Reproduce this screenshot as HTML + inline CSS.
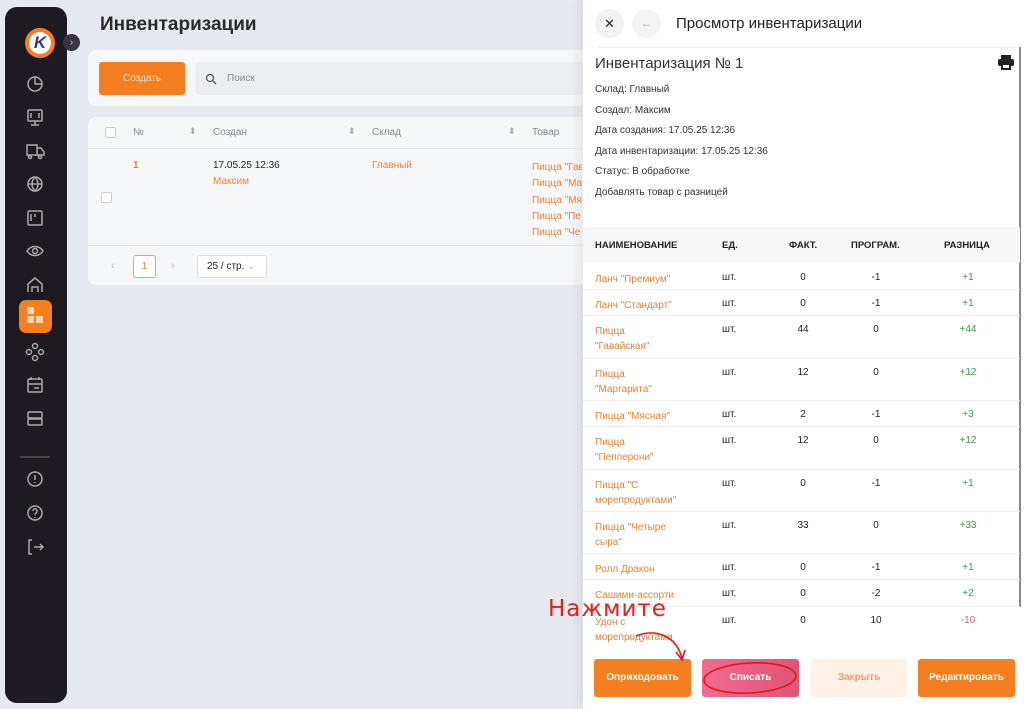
<!DOCTYPE html>
<html><head><meta charset="utf-8"><style>
*{box-sizing:border-box;margin:0;padding:0}
body{width:1024px;height:709px;overflow:hidden;background:#e6eaf0;font-family:"Liberation Sans",sans-serif;position:relative;color:#222}
.side{position:absolute;left:5px;top:7px;width:62px;height:696px;background:#1d1a22;border-radius:12px}
.logo{position:absolute;left:20px;top:21px;width:30px;height:30px;border-radius:50%;background:#f47f20;display:flex;align-items:center;justify-content:center}
.logo div{width:22px;height:22px;border-radius:50%;background:#fff;color:#2a3a9a;font-weight:bold;font-size:17px;text-align:center;line-height:22px;font-style:italic}
.tog{position:absolute;left:58px;top:27px;width:17px;height:17px;border-radius:50%;background:#3a3442;color:#ccc;font-size:10px;text-align:center;line-height:17px}
.act{position:absolute;left:19px;top:300px;width:33px;height:33px;border-radius:7px;background:#f47f20}
.h1{position:absolute;left:100px;top:14px;font-size:19px;font-weight:bold;color:#2a2a2a}
.card{position:absolute;background:#f6f7f9;border-radius:8px}
.o{color:#e0853a}
.panel{position:absolute;left:583px;top:0;width:441px;height:709px;background:#fff;box-shadow:-4px 0 12px rgba(0,0,0,.08)}
.p{position:absolute;font-size:10px;color:#333}
.row{position:absolute;left:0;width:437px;font-size:10px;border-bottom:1px solid #eee}
.row span{position:absolute}
.btn{position:absolute;top:659px;height:38px;border-radius:3px;font-size:10px;font-weight:bold;color:#fff;text-align:center;line-height:38px}
</style></head><body>
<div class="side">
<div class="logo"><div>K</div></div>
<div class="tog">›</div>
</div>
<svg style="position:absolute;left:0;top:0" width="70" height="709" fill="none" stroke="#aaa" stroke-width="1.5">
<circle cx="35" cy="84" r="7"/><path d="M35 77v7h7"/>
<rect x="28" y="110" width="14" height="11" rx="1"/><path d="M35 121v4M31 125h8M31 113v5M39 113v5"/>
<rect x="27" y="145" width="10" height="10"/><path d="M37 148h4l3 4v3h-7"/><circle cx="30" cy="157" r="1.5"/><circle cx="40" cy="157" r="1.5"/>
<circle cx="35" cy="184" r="7"/><path d="M28 184h14M35 177c-4 4-4 10 0 14c4-4 4-10 0-14"/>
<rect x="28" y="211" width="14" height="14" rx="1"/><path d="M31 214v7M35 214v3"/>
<path d="M27 251c4-6 12-6 16 0c-4 6-12 6-16 0z"/><circle cx="35" cy="251" r="2.5"/>
<path d="M28 292v-8l7-6 7 6v8M32 292v-5h6v5"/>
<circle cx="35" cy="346" r="2.5"/><circle cx="29" cy="352" r="2.5"/><circle cx="41" cy="352" r="2.5"/><circle cx="35" cy="358" r="2.5"/>
<rect x="28" y="379" width="14" height="13" rx="1"/><path d="M28 384h14M31 377v3M39 377v3M34 388h5"/>
<rect x="28" y="412" width="14" height="6" rx="1"/><rect x="28" y="419" width="14" height="6" rx="1"/>
<path d="M20 457h30" stroke="#555"/>
<circle cx="35" cy="479" r="7"/><path d="M35 475v5M35 482v1"/>
<circle cx="35" cy="513" r="7"/><path d="M33 511c0-3 4-3 4 0c0 2-2 2-2 4M35 517v1"/>
<path d="M32 540h-3v14h3M34 547h9M40 544l3 3-3 3"/>
</svg>
<div class="act"></div>
<svg style="position:absolute;left:26px;top:306px" width="20" height="22" fill="#f9d9b8"><rect x="1" y="1" width="7" height="7" rx="1"/><rect x="1" y="10" width="7" height="7" rx="1"/><rect x="10" y="10" width="7" height="7" rx="1"/></svg>
<div class="h1">Инвентаризации</div>
<div class="card" style="left:88px;top:50px;width:500px;height:56px"></div>
<div style="position:absolute;left:99px;top:62px;width:86px;height:33px;background:#f47f20;border-radius:3px;color:#fbe1cc;font-size:10px;text-align:center;line-height:33px">Создать</div>
<div style="position:absolute;left:195px;top:62px;width:390px;height:33px;background:#eceef1;border-radius:5px;font-size:10px;color:#888;line-height:33px;padding-left:32px">Поиск</div>
<svg style="position:absolute;left:205px;top:73px" width="12" height="12" fill="none" stroke="#555" stroke-width="1.3"><circle cx="5" cy="5" r="3.5"/><path d="M8 8l3 3"/></svg>
<div class="card" style="left:88px;top:117px;width:500px;height:168px"></div>
<div style="position:absolute;left:88px;top:117px;width:500px;height:32px;border-bottom:1px solid #e8e8e8;font-size:10px;color:#888">
<div style="position:absolute;left:17px;top:10px;width:11px;height:11px;border:1px solid #ccc;border-radius:2px;background:#fff"></div>
<span style="position:absolute;left:45px;top:10px">№</span><span style="position:absolute;left:101px;top:9px;font-size:9px;color:#aaa">⬍</span>
<span style="position:absolute;left:125px;top:10px">Создан</span><span style="position:absolute;left:260px;top:9px;font-size:9px;color:#aaa">⬍</span>
<span style="position:absolute;left:284px;top:10px">Склад</span><span style="position:absolute;left:420px;top:9px;font-size:9px;color:#aaa">⬍</span>
<span style="position:absolute;left:444px;top:10px">Товар</span></div>
<div style="position:absolute;left:88px;top:150px;font-size:10px">
<div style="position:absolute;left:13px;top:42px;width:11px;height:11px;border:1px solid #ccc;border-radius:2px;background:#fff"></div>
<span class="o" style="position:absolute;left:45px;top:10px;font-weight:bold">1</span>
<span style="position:absolute;left:125px;top:10px;white-space:nowrap">17.05.25 12:36</span>
<span class="o" style="position:absolute;left:125px;top:26px">Максим</span>
<span class="o" style="position:absolute;left:284px;top:10px">Главный</span>
<div class="o" style="position:absolute;left:444px;top:10px;line-height:16.3px;white-space:nowrap;width:50px;overflow:hidden">Пицца "Гав<br>Пицца "Ма<br>Пицца "Мя<br>Пицца "Пе<br>Пицца "Че</div></div>
<div style="position:absolute;left:88px;top:245px;width:500px;border-top:1px solid #e8e8e8"></div>
<span style="position:absolute;left:111px;top:260px;color:#bbb;font-size:11px">‹</span>
<div style="position:absolute;left:133px;top:255px;width:23px;height:23px;border:1px solid #f0a060;border-radius:3px;color:#e0853a;font-size:10px;text-align:center;line-height:21px;background:#fff">1</div>
<span style="position:absolute;left:171px;top:260px;color:#bbb;font-size:11px">›</span>
<div style="position:absolute;left:197px;top:255px;width:70px;height:23px;border:1px solid #ddd;border-radius:3px;font-size:10px;line-height:21px;padding-left:9px;background:#fff">25 / стр. <span style="color:#bbb">⌄</span></div>

<div class="panel">
<div style="position:absolute;left:12px;top:9px;width:29px;height:29px;border-radius:50%;background:#f2f2f2;text-align:center;line-height:29px;font-size:13px">✕</div>
<div style="position:absolute;left:49px;top:9px;width:29px;height:29px;border-radius:50%;background:#f4f4f4;text-align:center;line-height:29px;font-size:12px;color:#aaa">←</div>
<div style="position:absolute;left:93px;top:15px;font-size:15px;color:#222">Просмотр инвентаризации</div>
<div style="position:absolute;left:15px;top:47px;width:420px;border-top:1px solid #eee"></div>
<div style="position:absolute;left:436px;top:47px;height:560px;border-left:2px solid #888"></div>
<div class="p" style="left:12px;top:55px;font-size:15px">Инвентаризация № 1</div>
<svg style="position:absolute;left:415px;top:55px" width="16" height="15"><rect x="3" y="0" width="10" height="4" fill="#222"/><rect x="0" y="4" width="16" height="7" rx="2" fill="#222"/><rect x="3" y="9" width="10" height="6" fill="#222"/><rect x="5" y="10" width="6" height="3" fill="#fff"/></svg>
<div class="p" style="left:12px;top:84px">Склад: Главный</div>
<div class="p" style="left:12px;top:105px">Создал: Максим</div>
<div class="p" style="left:12px;top:125px">Дата создания: 17.05.25 12:36</div>
<div class="p" style="left:12px;top:146px">Дата инвентаризации: 17.05.25 12:36</div>
<div class="p" style="left:12px;top:166px">Статус: В обработке</div>
<div class="p" style="left:12px;top:187px">Добавлять товар с разницей</div>
<div style="position:absolute;left:0;top:227px;width:437px;height:36px;background:#f7f7f7;font-size:9.5px;font-weight:bold;color:#222">
<span style="position:absolute;left:12px;top:13px">НАИМЕНОВАНИЕ</span><span style="position:absolute;left:139px;top:13px">ЕД.</span><span style="position:absolute;left:206px;top:13px">ФАКТ.</span><span style="position:absolute;left:268px;top:13px">ПРОГРАМ.</span><span style="position:absolute;left:361px;top:13px">РАЗНИЦА</span></div>
<div id="rows"></div>
</div>
<script>
var d=[["Ланч \"Премиум\"","0","-1","+1",26],["Ланч \"Стандарт\"","0","-1","+1",26],["Пицца<br>\"Гавайская\"","44","0","+44",43],["Пицца<br>\"Маргарита\"","12","0","+12",42],["Пицца \"Мясная\"","2","-1","+3",26],["Пицца<br>\"Пепперони\"","12","0","+12",43],["Пицца \"С<br>морепродуктами\"","0","-1","+1",42],["Пицца \"Четыре<br>сыра\"","33","0","+33",42],["Ролл Дракон","0","-1","+1",26],["Сашими-ассорти","0","-2","+2",27],["Удон с<br>морепродуктами","0","10","-10",40]];
var y=264,h="";d.forEach(function(r){h+='<div class="row" style="top:'+y+'px;height:'+r[4]+'px"><span class="o" style="left:12px;top:8px;line-height:15px">'+r[0]+'</span><span style="left:139px;top:8px">шт.</span><span style="left:205px;top:8px;width:30px;text-align:center">'+r[1]+'</span><span style="left:278px;top:8px;width:30px;text-align:center">'+r[2]+'</span><span style="left:370px;top:8px;width:30px;text-align:center;color:'+(r[3][0]=='-'?'#e06070':'#3aa040')+'">'+r[3]+'</span></div>';y+=r[4];});
document.getElementById('rows').innerHTML=h;
</script>
<div style="position:absolute;left:583px;top:645px;width:441px;height:64px;background:#fff"></div>
<div class="btn" style="left:594px;width:97px;background:#f47f20">Оприходовать</div>
<div class="btn" style="left:702px;width:97px;background:linear-gradient(90deg,#f06a90,#e05575)">Списать</div>
<div class="btn" style="left:811px;width:96px;background:#fdf1e8;color:#f0a060">Закрыть</div>
<div class="btn" style="left:918px;width:97px;background:#f47f20">Редактировать</div>
<div style="position:absolute;left:548px;top:596px;font-size:23px;color:#e02020;font-family:'DejaVu Sans',sans-serif;letter-spacing:1px">Нажмите</div>
<svg style="position:absolute;left:0;top:0" width="1024" height="709" fill="none" stroke="#e01818" stroke-width="1.6">
<path d="M636 636c20-8 40 0 46 22"/><path d="M676 652l6 8 3-10"/>
<ellipse cx="750" cy="678" rx="46" ry="15" transform="rotate(-3 750 678)"/>
</svg>
</body></html>
